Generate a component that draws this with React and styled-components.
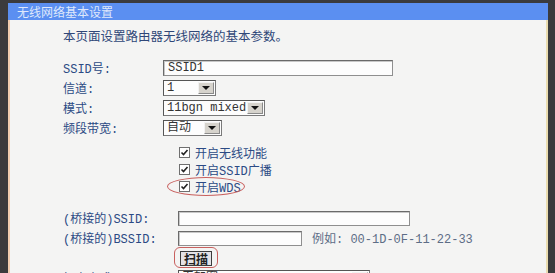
import React from 'react';
import styled, { createGlobalStyle } from 'styled-components';

const Global = createGlobalStyle`
  html, body {
    margin: 0;
    padding: 0;
    background: #3b3b3d;
    height: 273px;
    overflow: hidden;
  }
`;

const Panel = styled.div`
  margin: 3px 0 0 8px;
  width: 540px;
  height: 280px;
  background: #f4f4f3;
  border-left: 2px solid #f1cdb0;
  border-right: 2px solid #eadcaf;
  box-sizing: border-box;
  font-family: "Liberation Mono", "Noto Sans CJK SC", monospace;
  font-size: 12px;
  color: #2b4a84;
`;

const Header = styled.div`
  height: 17px;
  margin-left: -2px;
  margin-right: -2px;
  background: #5b8ff1;
  color: #dfe8fb;
  font-family: "Noto Sans CJK SC", sans-serif;
  font-size: 12px;
  line-height: 17px;
  padding-left: 9px;
`;

const Body = styled.div`
  padding: 7px 0 0 53px;
  display: flex;
  flex-direction: column;
`;

const Intro = styled.div`
  height: 18px;
  line-height: 18px;
  font-family: "Noto Sans CJK SC", sans-serif;
  font-size: 12.5px;
  color: #2f4778;
  margin-bottom: 13px;
`;

const Row = styled.div`
  display: flex;
  align-items: center;
  height: ${p => p.$h || 20}px;
`;

const Label = styled.div`
  width: ${p => p.$w || 100}px;
  flex: none;
  white-space: nowrap;
`;

const TextBox = styled.div`
  width: ${p => p.$w}px;
  height: ${p => p.$h || 16}px;
  box-sizing: border-box;
  background: #fdfdfd;
  border: 1px solid #8f8f8f;
  border-top-color: #6a6a6a;
  border-left-color: #6a6a6a;
  box-shadow: inset 1px 1px 0 #c8c8c8;
  padding-left: 4px;
  line-height: 14px;
  color: #333;
`;

const Select = styled.div`
  width: ${p => p.$w}px;
  height: ${p => p.$h || 16}px;
  box-sizing: border-box;
  display: flex;
  align-items: stretch;
  background: #fdfdfd;
  border: 1px solid #7a7a7a;
  border-top-color: #555;
  border-left-color: #555;
  color: #333;
`;

const SelectValue = styled.div`
  flex: 1;
  padding-left: 3px;
  line-height: 14px;
  white-space: nowrap;
  overflow: hidden;
`;

const Arrow = styled.div`
  width: 14px;
  margin: 1px;
  background: #d6d3cc;
  border: 1px solid #f2f2f2;
  border-right-color: #8a8a8a;
  border-bottom-color: #8a8a8a;
  display: flex;
  align-items: center;
  justify-content: center;
  &::after {
    content: "";
    border-left: 4px solid transparent;
    border-right: 4px solid transparent;
    border-top: 4px solid #111;
  }
`;

const CheckRow = styled.div`
  display: flex;
  align-items: center;
  height: 17px;
  padding-left: 116px;
  font-family: "Liberation Mono", "Noto Sans CJK SC", monospace;
  position: relative;
`;

const Box = styled.div`
  width: 11px;
  height: 11px;
  box-sizing: border-box;
  border: 1px solid #6f6f6f;
  background: #fff;
  margin-right: 5px;
  display: flex;
  align-items: center;
  justify-content: center;
`;

const Ring = styled.div`
  position: absolute;
  left: ${p => p.$x}px;
  top: ${p => p.$y}px;
  width: ${p => p.$w}px;
  height: ${p => p.$h}px;
  border: 1.5px solid #c8605e;
  border-radius: ${p => p.$r};
  pointer-events: none;
`;

const Hint = styled.span`
  margin-left: 10px;
  color: #5d6d86;
`;

const ScanRow = styled.div`
  height: 20px;
  display: flex;
  align-items: center;
  padding-left: 117px;
  position: relative;
`;

const Button = styled.div`
  width: 32px;
  height: 15px;
  box-sizing: border-box;
  background: #e4e2e6;
  border: 1px solid #3c3c3c;
  font-family: "Noto Sans CJK SC", sans-serif;
  font-weight: 700;
  font-size: 12px;
  line-height: 13px;
  text-align: center;
  color: #222;
`;

const Tick = () => (
  <svg width="9" height="9" viewBox="0 0 9 9">
    <path d="M1.5 4.5 L3.5 6.5 L7.5 2" fill="none" stroke="#222" strokeWidth="1.6" />
  </svg>
);

const Check = ({ children, ring }) => (
  <CheckRow>
    <Box><Tick /></Box>
    {children}
    {ring && <Ring $x={104} $y={-1} $w={76} $h={17} $r="50%" />}
  </CheckRow>
);

export default function App() {
  return (
    <>
      <Global />
      <Panel>
        <Header>无线网络基本设置</Header>
        <Body>
          <Intro>本页面设置路由器无线网络的基本参数。</Intro>
          <Row>
            <Label>SSID号:</Label>
            <TextBox $w={230}>SSID1</TextBox>
          </Row>
          <Row>
            <Label>信道:</Label>
            <Select $w={53}><SelectValue>1</SelectValue><Arrow /></Select>
          </Row>
          <Row>
            <Label>模式:</Label>
            <Select $w={102}><SelectValue>11bgn mixed</SelectValue><Arrow /></Select>
          </Row>
          <Row>
            <Label>频段带宽:</Label>
            <Select $w={59}><SelectValue>自动</SelectValue><Arrow /></Select>
          </Row>
          <Row $h={6} />
          <Check>开启无线功能</Check>
          <Check>开启SSID广播</Check>
          <Check ring>开启WDS</Check>
          <Row $h={13} />
          <Row>
            <Label $w={115}>(桥接的)SSID:</Label>
            <TextBox $w={232} $h={15} />
          </Row>
          <Row>
            <Label $w={115}>(桥接的)BSSID:</Label>
            <TextBox $w={124} $h={15} />
            <Hint>例如: 00-1D-0F-11-22-33</Hint>
          </Row>
          <ScanRow>
            <Button>扫描</Button>
            <Ring $x={111} $y={-1} $w={42} $h={19} $r="6px" />
          </ScanRow>
          <Row>
            <Label $w={115}>加密方式:</Label>
            <Select $w={192}><SelectValue>无加密</SelectValue><Arrow /></Select>
          </Row>
        </Body>
      </Panel>
    </>
  );
}
